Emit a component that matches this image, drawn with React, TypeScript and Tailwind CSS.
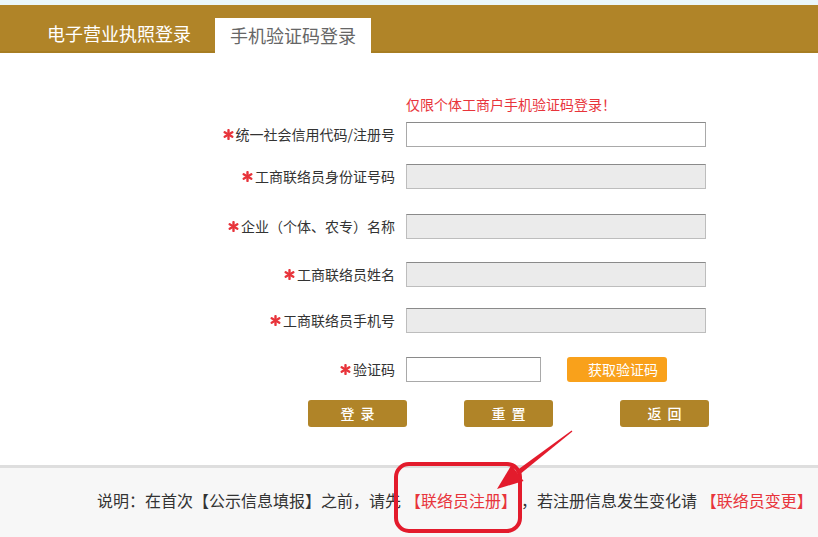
import React from "react";

const Star = () => (
  <svg width="11" height="11" viewBox="0 0 12 12" className="mr-[2px] shrink-0">
    <g stroke="#e8343b" strokeWidth="2.6" strokeLinecap="round">
      <line x1="6" y1="1.2" x2="6" y2="10.8" />
      <line x1="1.8" y1="3.6" x2="10.2" y2="8.4" />
      <line x1="1.8" y1="8.4" x2="10.2" y2="3.6" />
    </g>
  </svg>
);

type Row = { label: string; mt: string; disabled: boolean };

const rows: Row[] = [
  { label: "统一社会信用代码/注册号", mt: "mt-[8px]", disabled: false },
  { label: "工商联络员身份证号码", mt: "mt-[17px]", disabled: true },
  { label: "企业（个体、农专）名称", mt: "mt-[25px]", disabled: true },
  { label: "工商联络员姓名", mt: "mt-[23px]", disabled: true },
  { label: "工商联络员手机号", mt: "mt-[21px]", disabled: true },
];

const Field = ({ label, mt, disabled }: Row) => (
  <div className={`flex items-center h-[25px] ${mt}`}>
    <div className="w-[395px] flex justify-end items-center text-[14px] text-[#333] whitespace-nowrap">
      <Star />
      {label}
    </div>
    <div
      className={`ml-[11px] w-[300px] h-[25px] border border-[#a9a9a9] border-t-[#8a8a8a] ${
        disabled ? "bg-[#ebebeb] border-[#bdbdbd]" : "bg-white"
      }`}
    />
  </div>
);

const Annotation = () => (
  <svg width="818" height="537" className="absolute left-0 top-0 pointer-events-none">
    <rect x="396" y="464" width="124" height="67" rx="13" fill="none" stroke="#e31b2c" strokeWidth="4" />
    <polygon points="572.4,431.4 571.6,430.6 516,471 519,475" fill="#e31b2c" />
    <polygon points="497,489 511.4,465.1 523.6,480.9" fill="#e31b2c" />
  </svg>
);

const App = () => {
  return (
    <div className="relative w-[818px] h-[537px] flex flex-col bg-white font-['Noto_Sans_CJK_SC','Liberation_Sans',sans-serif] overflow-hidden">
      <div className="h-[5px] bg-[#eaf6fa]" />
      <div className="h-[48px] bg-[#b08428] flex items-end border-b-2 border-[#a77d22]">
        <div className="ml-[47px] h-[35px] flex items-center text-[18px] text-white">电子营业执照登录</div>
        <div className="ml-[24px] w-[156px] h-[35px] bg-white flex items-center justify-center text-[18px] text-[#666] -mb-[2px]">
          手机验证码登录
        </div>
      </div>

      <div className="h-[412px] flex flex-col pt-[41px]">
        <div className="ml-[406px] h-[20px] text-[14px] leading-[20px] text-[#e8343b]">仅限个体工商户手机验证码登录！</div>
        {rows.map((r) => (
          <Field key={r.label} {...r} />
        ))}
        <div className="flex items-center h-[25px] mt-[24px]">
          <div className="w-[395px] flex justify-end items-center text-[14px] text-[#333]">
            <Star />
            验证码
          </div>
          <div className="ml-[11px] w-[135px] h-[25px] border border-[#a9a9a9] border-t-[#8a8a8a] bg-white" />
          <div className="ml-[26px] w-[100px] h-[25px] rounded-[3px] bg-[#f9a11b] text-white text-[14px] flex items-center pl-[21px]">
            获取验证码
          </div>
        </div>
        <div className="flex mt-[18px] pl-[308px]">
          <div className="w-[99px] h-[27px] rounded-[3px] bg-[#b08428] text-white text-[14px] font-medium tracking-[6px] flex items-center justify-center pl-[6px]">
            登录
          </div>
          <div className="ml-[57px] w-[89px] h-[27px] rounded-[3px] bg-[#b08428] text-white text-[14px] font-medium tracking-[6px] flex items-center justify-center pl-[6px]">
            重置
          </div>
          <div className="ml-[67px] w-[89px] h-[27px] rounded-[3px] bg-[#b08428] text-white text-[14px] font-medium tracking-[6px] flex items-center justify-center pl-[6px]">
            返回
          </div>
        </div>
      </div>

      <div className="flex-1 border-t-[3px] border-[#dedede] bg-[#f7f7f7] pl-[97px] pt-[20px]">
        <p className="text-[16px] leading-[24px] text-[#333] whitespace-nowrap">
          说明：在首次【公示信息填报】之前，请先
          <span className="ml-[4px] mr-[12px] text-[#e8343b]">【联络员注册】</span>，若注册信息发生变化请
          <span className="text-[#e8343b]"> 【联络员变更】</span>
        </p>
      </div>

      <Annotation />
    </div>
  );
};

export default App;
